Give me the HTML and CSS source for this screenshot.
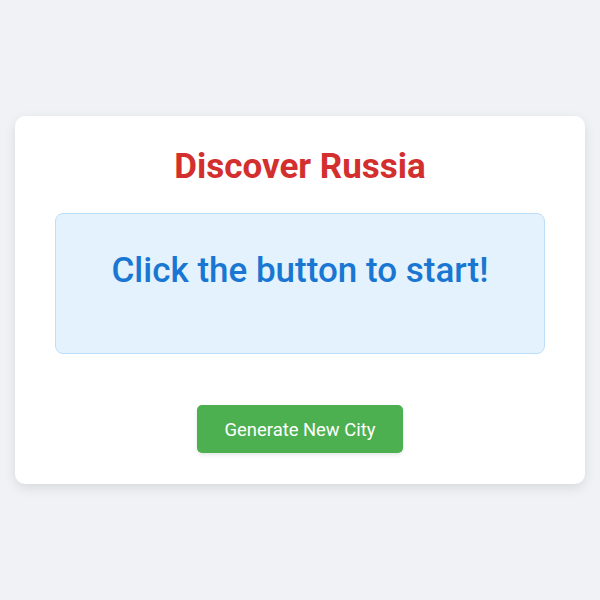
FILE: index.html
```html
<!DOCTYPE html>
<html lang="en">
<head>
<meta charset="utf-8">
<link rel="stylesheet" href="styles.css">
</head>
<body>
<div class="page">
  <div class="card">
    <h1 class="title">Discover Russia</h1>
    <div class="info">
      <p class="info-text">Click the button to start!</p>
    </div>
    <button class="btn">Generate New City</button>
  </div>
</div>
</body>
</html>
```

FILE: styles.css
```css
* { box-sizing: border-box; }
html, body { margin: 0; padding: 0; }
body {
  background: #f0f2f5;
  font-family: Roboto, "Noto Sans", sans-serif;
  width: 600px;
  height: 600px;
}
.page {
  padding: 116px 15px 0;
}
.card {
  background: #ffffff;
  border-radius: 10px;
  box-shadow: 0 4px 12px rgba(0, 0, 0, 0.1);
  padding: 30px 40px 31px;
  display: flex;
  flex-direction: column;
  align-items: center;
}
.title {
  margin: 0 0 26px;
  font-size: 35px;
  line-height: 41px;
  font-weight: 700;
  color: #d32f2f;
}
.info {
  width: 100%;
  height: 141px;
  background: #e3f2fd;
  border: 1px solid #bbdefb;
  border-radius: 8px;
  padding: 36px 20px 0;
  text-align: center;
}
.info-text {
  margin: 0;
  font-size: 35px;
  line-height: 42px;
  font-weight: 500;
  color: #1976d2;
}
.btn {
  margin-top: 51px;
  width: 206px;
  height: 48px;
  background: #4caf50;
  color: #ffffff;
  border: none;
  border-radius: 5px;
  font-family: Roboto, "Noto Sans", sans-serif;
  font-size: 18.4px;
  box-shadow: 0 2px 4px rgba(0, 0, 0, 0.1);
}
```
